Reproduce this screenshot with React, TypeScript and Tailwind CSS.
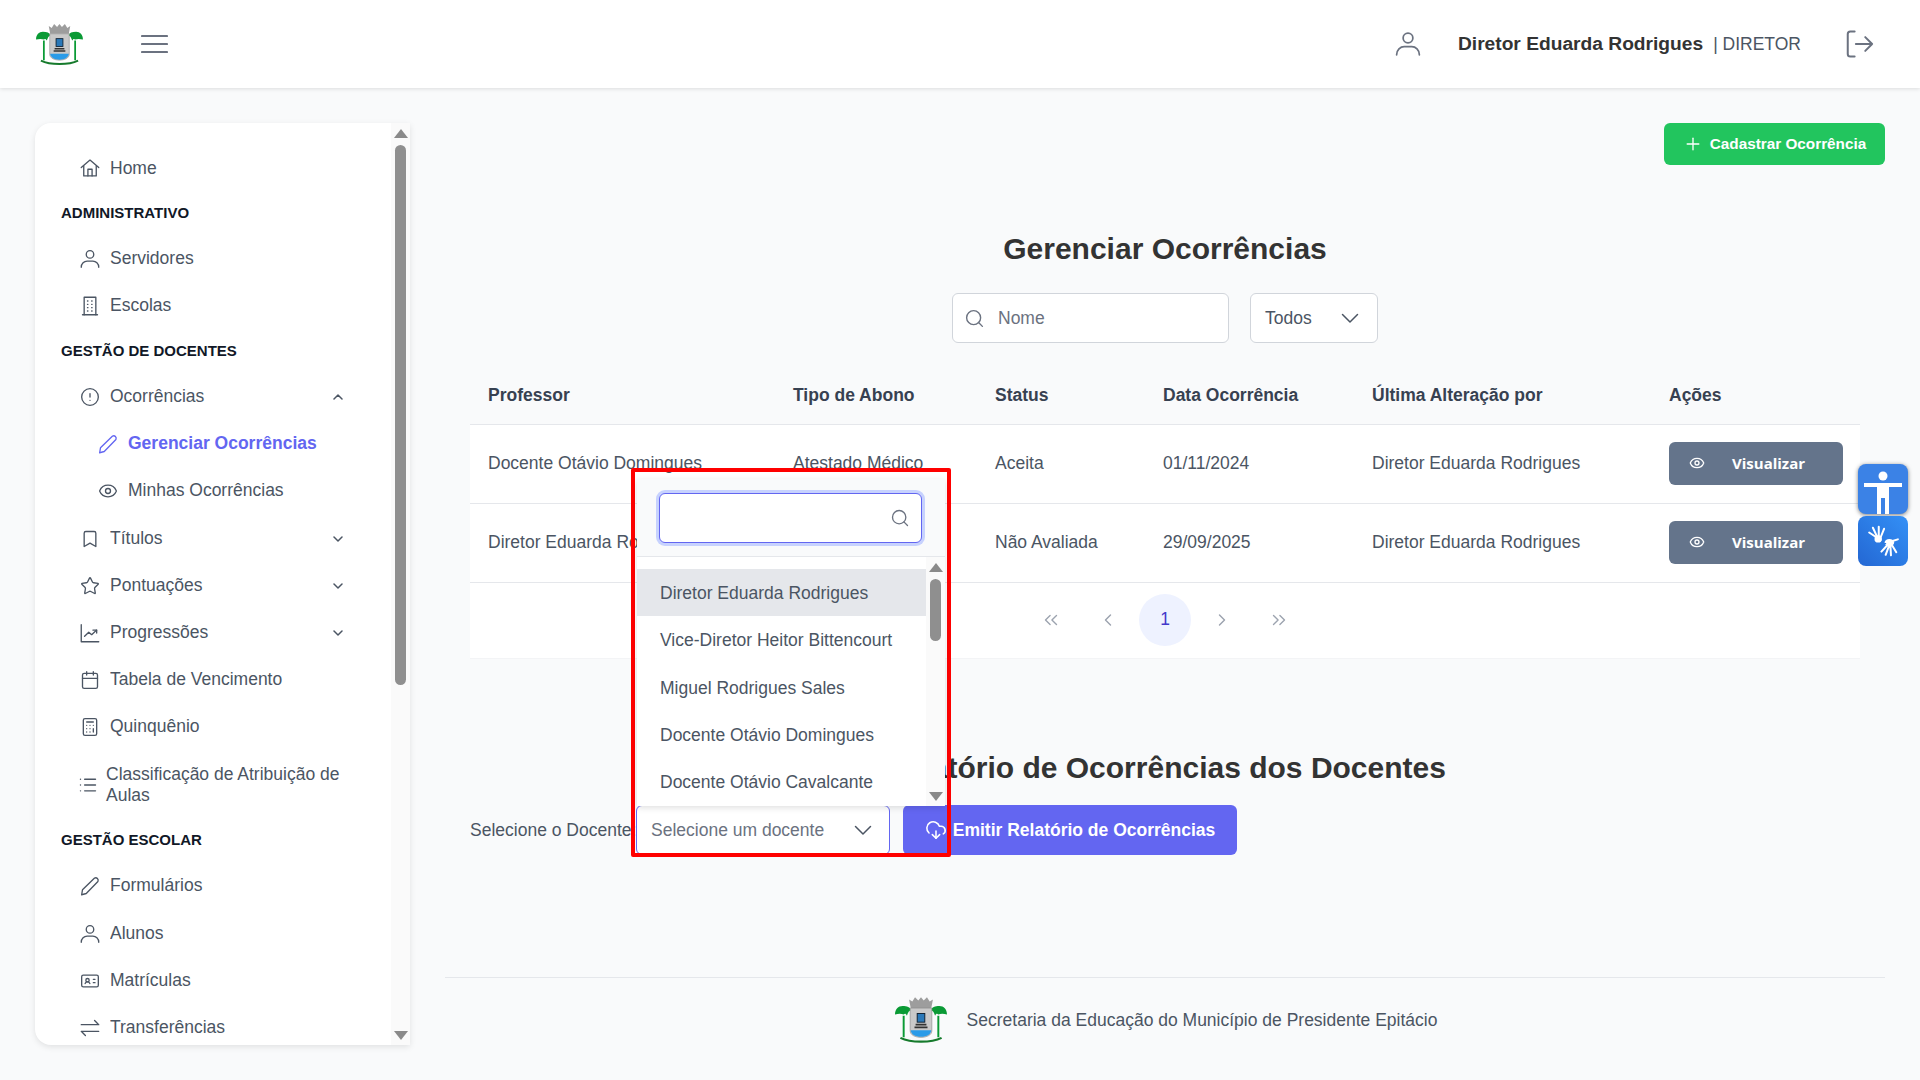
import React from 'react';
import { Calculator, Calendar, Bookmark, ChevronLeft, ChevronRight, ChevronsLeft, ChevronsRight, CloudDownload, Eye, List, Plus, Search, Star, CircleAlert, IdCard } from 'lucide-react';

const ic = 'w-[20px] h-[20px] shrink-0';

function Svg({ children, className = ic }: { children: React.ReactNode; className?: string }) {
  return (
    <svg viewBox="0 0 24 24" fill="none" stroke="currentColor" strokeWidth="1.6" strokeLinecap="round" strokeLinejoin="round" className={className}>
      {children}
    </svg>
  );
}

const HomeIcon = ({ className }: { className?: string }) => (
  <Svg className={className}>
    <path d="M1.5 11.5 12 2.5l10.5 9" />
    <path d="M4.5 9.5V21.5h15V9.5" />
    <path d="M9.5 21.5v-8h5v8" />
  </Svg>
);
const UserIcon = ({ className }: { className?: string }) => (
  <Svg className={className}>
    <circle cx="12" cy="6.5" r="4.5" />
    <path d="M1.5 22c0-4.500 3.500-7.500 7-7.500h7c3.500 0 7 3 7 7.500" />
  </Svg>
);
const BuildingIcon = ({ className }: { className?: string }) => (
  <Svg className={className}>
    <path d="M5 22.5V1.5h14v21" />
    <path d="M3 22.5h18" />
    <path d="M9 6h.5M14 6h.5M9 10h.5M14 10h.5M9 14h.5M14 14h.5M9 18h.5M14 18h.5" />
  </Svg>
);
const PencilIcon = ({ className }: { className?: string }) => (
  <Svg className={className}>
    <path d="M2 22.5l1-6L17.5 2.5a3 3 0 0 1 4 4L7.5 21z" />
  </Svg>
);
const ChartIcon = ({ className }: { className?: string }) => (
  <Svg className={className}>
    <path d="M1.5 2v20.5h21" />
    <path d="M5.5 16l5-5 3.5 3 6-5.5" />
    <path d="M15.5 8.5h4.500V12" />
  </Svg>
);
const SwapIcon = ({ className }: { className?: string }) => (
  <Svg className={className}>
    <path d="M1.5 8h21l-5-5" />
    <path d="M22.5 16h-21l5 5" />
  </Svg>
);
const LogoutIcon = ({ className }: { className?: string }) => (
  <Svg className={className}>
    <path d="M8.5 2H5a2 2 0 0 0-2 2v16a2 2 0 0 0 2 2h3.5" />
    <path d="M9.5 12h13M17 6.5l5.5 5.500-5.500 5.500" />
  </Svg>
);
const Caret = ({ className = 'w-[18px] h-[18px] shrink-0' }: { className?: string }) => (
  <svg viewBox="0 0 18 18" fill="none" stroke="currentColor" strokeWidth="1.5" strokeLinecap="round" strokeLinejoin="round" className={className}>
    <path d="M1.5 5.5 9 13l7.500-7.500" />
  </svg>
);
const SmallCaret = ({ up }: { up?: boolean }) => (
  <svg viewBox="0 0 10 10" fill="none" stroke="currentColor" strokeWidth="1.5" strokeLinecap="round" strokeLinejoin="round" className="w-[10px] h-[10px] shrink-0 mr-[3px]">
    <path d={up ? 'M1 7l4-4 4 4' : 'M1 3l4 4 4-4'} />
  </svg>
);

function Crest({ className }: { className: string }) {
  return (
    <svg viewBox="0 0 48 44" className={className}>
      <path d="M8 18v20M40 18v20" stroke="#0a9a35" strokeWidth="1.800" fill="none" />
      <path d="M0 17c0-5 3-8 7-8 4 0 7 1 8 4-2 0-3 2-4 5-1-2-2-2-3-1-2-1-5-1-8 0z" fill="#0a9a35" />
      <path d="M48 17c0-5-3-8-7-8-4 0-7 1-8 4 2 0 3 2 4 5 1-2 2-2 3-1 2-1 5-1 8 0z" fill="#0a9a35" />
      <path d="M13 3l3 2 2.500-4 3 3L24 1l2.500 3 3-3L32 5l3-2-1.500 8h-19z" fill="#9d9d9d" />
      <path d="M14 11h20v21c0 4-5 6-10 6s-10-2-10-6z" fill="#c9c9c9" stroke="#8a8a8a" strokeWidth=".6" />
      <rect x="20.500" y="16" width="7" height="8" fill="#2a78b8" stroke="#123" strokeWidth=".9" />
      <path d="M19 25.500h10v1.500H19zM18 28h12v1.500H18z" fill="#333" />
      <path d="M14.500 31.500h19c0 3.500-4 6-9.500 6s-9.500-2.500-9.500-6z" fill="#2a9be8" />
      <path d="M5 38.500c5 2.500 12 3.500 19 3.500s14-1 19-3.500" stroke="#167a2c" strokeWidth="2" fill="none" />
    </svg>
  );
}

function NavRow({ icon, label, chevron, sub, active, className = '' }: { icon: React.ReactNode; label: string; chevron?: 'up' | 'down'; sub?: boolean; active?: boolean; className?: string }) {
  return (
    <div className={`flex items-center gap-[10px] h-[47px] pr-[45px] ${sub ? 'pl-[63px]' : 'pl-[45px]'} ${active ? 'text-[#6366f1] font-bold' : 'text-[#4b5563]'} ${className}`}>
      {icon}
      <span className="flex-1 truncate">{label}</span>
      {chevron === 'up' && <SmallCaret up />}
      {chevron === 'down' && <SmallCaret />}
    </div>
  );
}

function NavTitle({ children }: { children: React.ReactNode }) {
  return <div className="pl-[26px] h-[44px] flex items-center text-[15px] font-bold text-[#111827]">{children}</div>;
}

function Sidebar() {
  return (
    <aside className="w-[375px] h-[922px] shrink-0 ml-[35px] mt-[35px] bg-white rounded-l-2xl shadow-[0_2px_6px_rgba(0,0,0,0.1)] flex overflow-hidden text-[17.5px]">
      <div className="flex-1 pt-[21px] overflow-hidden">
        <NavRow icon={<HomeIcon className={ic} />} label="Home" className="pt-px" />
        <NavTitle>ADMINISTRATIVO</NavTitle>
        <NavRow icon={<UserIcon className={ic} />} label="Servidores" />
        <NavRow icon={<BuildingIcon className={ic} />} label="Escolas" />
        <NavTitle>GESTÃO DE DOCENTES</NavTitle>
        <NavRow icon={<CircleAlert className={ic} strokeWidth={1.6} />} label="Ocorrências" chevron="up" />
        <NavRow sub active icon={<PencilIcon className={ic} />} label="Gerenciar Ocorrências" />
        <NavRow sub icon={<Eye className={ic} strokeWidth={1.6} />} label="Minhas Ocorrências" />
        <NavRow className="mt-px" icon={<Bookmark className={ic} strokeWidth={1.6} />} label="Títulos" chevron="down" />
        <NavRow icon={<Star className={ic} strokeWidth={1.6} />} label="Pontuações" chevron="down" />
        <NavRow icon={<ChartIcon className={ic} />} label="Progressões" chevron="down" />
        <NavRow icon={<Calendar className={ic} strokeWidth={1.6} />} label="Tabela de Vencimento" />
        <NavRow icon={<Calculator className={ic} strokeWidth={1.6} />} label="Quinquênio" />
        <div className="flex items-center gap-[8px] h-[68px] pt-[2px] pl-[43px] pr-[50px] text-[#4b5563] leading-[21px]">
          <List className="w-[20px] h-[20px] shrink-0" strokeWidth={1.7} />
          <span>Classificação de Atribuição de Aulas</span>
        </div>
        <NavTitle>GESTÃO ESCOLAR</NavTitle>
        <NavRow icon={<PencilIcon className={ic} />} label="Formulários" />
        <NavRow className="mt-px" icon={<UserIcon className={ic} />} label="Alunos" />
        <NavRow icon={<IdCard className={ic} strokeWidth={1.6} />} label="Matrículas" />
        <NavRow icon={<SwapIcon className={ic} />} label="Transferências" />
      </div>
      <ScrollTrack thumbTop={13} thumbHeight={540} height={922} />
    </aside>
  );
}

function ScrollTrack({ thumbTop, thumbHeight, height }: { thumbTop: number; thumbHeight: number; height: number }) {
  return (
    <div className="w-[19px] shrink-0 bg-[#fafafa] flex flex-col items-center pt-[6px] pb-[5px]" style={{ height }}>
      <div className="w-0 h-0 border-x-[7px] border-x-transparent border-b-[9px] border-b-[#8a8a8a]" />
      <div className="w-[11px] rounded-full bg-[#8f8f8f]" style={{ marginTop: thumbTop - 6, height: thumbHeight }} />
      <div className="flex-1" />
      <div className="w-0 h-0 border-x-[7px] border-x-transparent border-t-[9px] border-t-[#8a8a8a]" />
    </div>
  );
}

const rows = [
  { name: 'Docente Otávio Domingues', tipo: 'Atestado Médico', status: 'Aceita', data: '01/11/2024' },
  { name: 'Diretor Eduarda Rodrigues', tipo: 'Atestado Médico', status: 'Não Avaliada', data: '29/09/2025' },
];

const cols = 'grid grid-cols-[305px_202px_168px_209px_297px_209px] pl-[18px] items-center';

function OccurrenceTable() {
  return (
    <div className="w-[1390px] ml-[25px] text-[17.5px]">
      <div className={`${cols} h-[81px] pt-[22px] font-bold text-[#374151] border-b border-[#e5e7eb]`}>
        <div>Professor</div>
        <div>Tipo de Abono</div>
        <div>Status</div>
        <div>Data Ocorrência</div>
        <div>Última Alteração por</div>
        <div>Ações</div>
      </div>
      {rows.map((r) => (
        <div key={r.data} className={`${cols} h-[79px] pb-[2px] bg-white text-[#4b5563] border-b border-[#e5e7eb]`}>
          <div className="whitespace-nowrap">{r.name}</div>
          <div>{r.tipo}</div>
          <div>{r.status}</div>
          <div>{r.data}</div>
          <div>Diretor Eduarda Rodrigues</div>
          <div>
            <button className="w-[174px] h-[43px] rounded-md bg-[#64748b] text-white flex items-center pl-[20px] text-[15px] font-bold font-['Open_Sans',sans-serif]">
              <Eye className="w-4 h-4 mr-[27px]" strokeWidth={2} />
              Visualizar
            </button>
          </div>
        </div>
      ))}
      <div className="h-[76px] pb-[2px] bg-white border-b border-[#f3f4f6] flex items-center justify-center gap-[5px] text-[#9ca3af]">
        <span className="w-[52px] h-[52px] flex items-center justify-center"><ChevronsLeft className="w-[22px] h-[22px]" strokeWidth={1.5} /></span>
        <span className="w-[52px] h-[52px] flex items-center justify-center"><ChevronLeft className="w-[20px] h-[20px]" strokeWidth={1.7} /></span>
        <span className="w-[52px] h-[52px] rounded-full bg-[#eef2ff] text-[#4338ca] flex items-center justify-center">1</span>
        <span className="w-[52px] h-[52px] flex items-center justify-center"><ChevronRight className="w-[20px] h-[20px]" strokeWidth={1.7} /></span>
        <span className="w-[52px] h-[52px] flex items-center justify-center"><ChevronsRight className="w-[22px] h-[22px]" strokeWidth={1.5} /></span>
      </div>
    </div>
  );
}

const docentes = ['Diretor Eduarda Rodrigues', 'Vice-Diretor Heitor Bittencourt', 'Miguel Rodrigues Sales', 'Docente Otávio Domingues', 'Docente Otávio Cavalcante'];

function DocenteDropdown() {
  return (
    <div className="absolute left-[631px] top-[468px] w-[320px] h-[389px] border-[4px] border-[#ff0000] rounded-[2px] z-20 text-[17.5px]">
      <div className="mt-[7px] ml-[2px] w-[308px] h-[327px] bg-white shadow-[0_2px_6px_rgba(0,0,0,0.12)] flex flex-col">
        <div className="h-[78px] bg-[#f9fafb] border-b border-[#e5e7eb] flex items-center pl-[22px] shrink-0">
          <div className="w-[263px] h-[50px] bg-white rounded-md border border-[#6366f1] ring-[3px] ring-[#c7d2fe] flex items-center justify-end pr-[11px]">
            <Search className="w-[20px] h-[20px] text-[#6b7280]" strokeWidth={1.6} />
          </div>
        </div>
        <div className="flex flex-1 min-h-0">
          <div className="flex-1 pt-[12px]">
            {docentes.map((d, i) => (
              <div key={d} className={`h-[47.3px] pt-px flex items-center pl-[23px] text-[#4b5563] ${i === 0 ? 'bg-[#e5e7eb]' : ''}`}>{d}</div>
            ))}
          </div>
          <ScrollTrack thumbTop={13} thumbHeight={62} height={249} />
        </div>
      </div>
    </div>
  );
}

function Main() {
  return (
    <main className="w-[1440px] ml-[35px] pt-[35px]">
      <div className="flex justify-end">
        <button className="w-[221px] h-[42px] rounded-md bg-[#22c55e] text-white flex items-center justify-center gap-[7px] text-[15.3px] font-bold">
          <Plus className="w-[20px] h-[20px]" strokeWidth={1.6} />
          Cadastrar Ocorrência
        </button>
      </div>
      <h1 className="mt-[66px] text-center text-[30px] leading-[36px] font-bold text-[#333333]">Gerenciar Ocorrências</h1>
      <div className="mt-[26px] mb-[1px] flex justify-center gap-[21px] text-[17.5px]">
        <div className="w-[277px] h-[50px] rounded-md bg-white border border-[#d1d5db] flex items-center pl-[11px] gap-[13px] text-[#6b7280]">
          <Search className="w-[21px] h-[21px]" strokeWidth={1.6} />
          Nome
        </div>
        <div className="w-[128px] h-[50px] rounded-md bg-white border border-[#d1d5db] flex items-center justify-between pl-[14px] pr-[18px] text-[#4b5563]">
          Todos
          <Caret className="w-[18px] h-[18px] text-[#4b5563]" />
        </div>
      </div>
      <OccurrenceTable />
      <h2 className="mt-[91px] text-center text-[30px] leading-[36px] font-bold text-[#333333]">Relatório de Ocorrências dos Docentes</h2>
      <div className="mt-[19px] ml-[25px] flex items-center text-[17.5px] text-[#4b5563]">
        <span className="w-[166px] whitespace-nowrap">Selecione o Docente:</span>
        <div className="w-[254px] h-[50px] rounded-md bg-white border border-[#6366f1] flex items-center justify-between pl-[14px] pr-[17px] text-[#6b7280]">
          Selecione um docente
          <Caret className="w-[18px] h-[18px] text-[#4b5563]" />
        </div>
        <button className="ml-[13px] w-[334px] h-[50px] rounded-md bg-[#6366f1] text-white font-bold flex items-center justify-center gap-[6px]">
          <CloudDownload className="w-[22px] h-[22px]" strokeWidth={1.7} />
          Emitir Relatório de Ocorrências
        </button>
      </div>
      <footer className="mt-[122px] border-t border-[#e5e7eb] h-[83px] pt-[2px] pl-[2px] flex items-center justify-center gap-[20px] text-[17.5px] text-[#4b5563]">
        <Crest className="w-[52px] h-[48px]" />
        Secretaria da Educação do Município de Presidente Epitácio
      </footer>
    </main>
  );
}

function A11yWidgets() {
  return (
    <div className="absolute left-[1858px] top-[464px] flex flex-col gap-[2px] z-10">
      <div className="w-[50px] h-[50px] rounded-lg bg-[#3b82e6] shadow-[0_1px_4px_rgba(0,0,0,0.5)] flex items-center justify-center">
        <svg viewBox="0 0 40 46" className="w-[40px] h-[46px] mt-[4px]" fill="#fff">
          <circle cx="20" cy="8" r="4.500" />
          <path d="M1 15h38v4H26v27h-4V30h-4v16h-4V19H1z" />
        </svg>
      </div>
      <div className="w-[50px] h-[50px] rounded-lg bg-gradient-to-tr from-[#2467d3] to-[#3490f6] flex items-center justify-center">
        <svg viewBox="0 0 32 32" className="w-[34px] h-[34px]" fill="none" stroke="#fff" strokeWidth="1.900" strokeLinecap="round">
          <path d="M9 12 3 8M10 11 6.500 3.500M12 11V2.500M14 12l3-7.500" />
          <ellipse cx="11.500" cy="14" rx="3.500" ry="3.500" fill="#fff" stroke="none" />
          <path d="M20 20l-5.500 6M21.500 21l-3 8M23 21l.5 8.500M24.500 20l4 6.500M25 16l5-1.500" />
          <ellipse cx="22" cy="17.500" rx="4.500" ry="3.500" fill="#fff" stroke="none" />
          <path d="M15 16.500c1 1.500 2 2 3.500 2" stroke="#2a78e0" strokeWidth="1.100" />
        </svg>
      </div>
    </div>
  );
}

export default function App() {
  return (
    <div className="relative w-[1920px] h-[1080px] overflow-hidden bg-[#f9fafb] font-['Liberation_Sans',sans-serif]">
      <header className="h-[88px] bg-white shadow-[0_1px_4px_rgba(0,0,0,0.12)] flex items-center pl-[36px] pr-[46px]">
        <Crest className="w-[47px] h-[43px]" />
        <svg viewBox="0 0 27 20" className="ml-[58px] w-[27px] h-[20px] text-[#6b7280]" fill="none" stroke="currentColor" strokeWidth="2.200" strokeLinecap="round">
          <path d="M1 2h25M1 10h25M1 18h25" />
        </svg>
        <div className="flex-1" />
        <UserIcon className="w-[26px] h-[26px] text-[#6b7280]" />
        <span className="ml-[37px] text-[19.2px] font-bold text-[#333333]">Diretor Eduarda Rodrigues</span>
        <span className="ml-[10px] text-[17.5px] text-[#4b5563]">| DIRETOR</span>
        <LogoutIcon className="ml-[43px] w-[30px] h-[30px] text-[#6b7280]" />
      </header>
      <div className="flex">
        <Sidebar />
        <Main />
      </div>
      <DocenteDropdown />
      <A11yWidgets />
    </div>
  );
}
